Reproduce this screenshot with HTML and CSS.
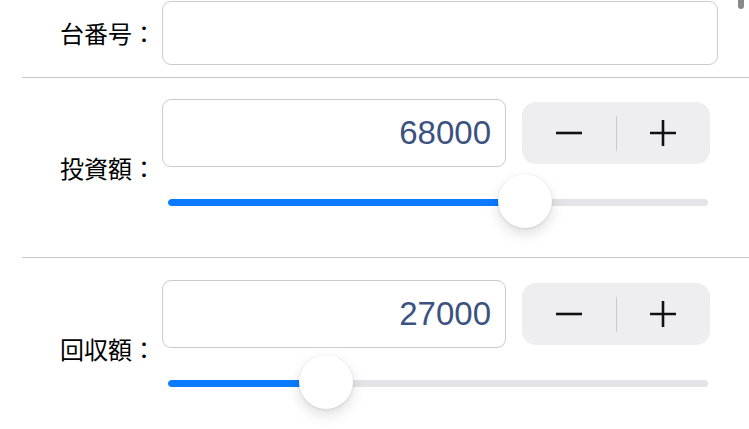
FILE: index.html
```html
<!DOCTYPE html>
<html lang="ja">
<head>
  <meta charset="UTF-8" />
  <meta name="viewport" content="width=device-width, initial-scale=1.0" />
  <title>収支入力</title>
  <link rel="stylesheet" href="styles.css">
</head>
<body>
  <div class="form">
    <!-- 台番号 -->
    <div class="row row-first">
      <label class="label">台番号：</label>
      <div class="field">
        <input class="text-input plain" type="text" value="">
      </div>
    </div>

    <!-- 投資額 -->
    <div class="row">
      <label class="label">投資額：</label>
      <div class="field">
        <div class="input-line">
          <input class="text-input num" type="text" value="68000">
          <div class="stepper">
            <button class="step-btn" aria-label="minus">
              <svg width="26" height="26" viewBox="0 0 26 26"><path d="M0 13H26" stroke="#111" stroke-width="2.6"/></svg>
            </button>
            <span class="step-sep"></span>
            <button class="step-btn" aria-label="plus">
              <svg width="26" height="26" viewBox="0 0 26 26"><path d="M0 13H26M13 0V26" stroke="#111" stroke-width="2.6"/></svg>
            </button>
          </div>
        </div>
        <div class="slider" style="--v:0.68">
          <div class="track"><div class="fill"></div></div>
          <div class="thumb"></div>
        </div>
      </div>
    </div>

    <!-- 回収額 -->
    <div class="row row-last">
      <label class="label">回収額：</label>
      <div class="field">
        <div class="input-line">
          <input class="text-input num" type="text" value="27000">
          <div class="stepper">
            <button class="step-btn" aria-label="minus">
              <svg width="26" height="26" viewBox="0 0 26 26"><path d="M0 13H26" stroke="#111" stroke-width="2.6"/></svg>
            </button>
            <span class="step-sep"></span>
            <button class="step-btn" aria-label="plus">
              <svg width="26" height="26" viewBox="0 0 26 26"><path d="M0 13H26M13 0V26" stroke="#111" stroke-width="2.6"/></svg>
            </button>
          </div>
        </div>
        <div class="slider" style="--v:0.27">
          <div class="track"><div class="fill"></div></div>
          <div class="thumb"></div>
        </div>
      </div>
    </div>
  </div>

  <div class="scroll-indicator"></div>
</body>
</html>
```

FILE: styles.css
```css
/* Reset */
* { margin: 0; padding: 0; box-sizing: border-box; }
body {
  background: #fff;
  overflow: hidden;
  font-family: "Noto Sans CJK JP", sans-serif;
  color: #000;
}

/* Form list with inset separators */
.form {
  margin-left: 22px;
}
.row {
  display: flex;
  align-items: center;
  gap: 6px;
  padding: 21px 31px 21px 0;
  border-top: 1px solid #c8c8cc;
}
.row-first {
  padding-top: 1px;
  padding-bottom: 12px;
  border-top: none;
}
.row-last {
  padding-top: 22px;
}
.label {
  flex: 0 0 134px;
  text-align: right;
  font-size: 24px;
  line-height: 30px;
  white-space: nowrap;
}
.field {
  flex: 1;
  display: flex;
  flex-direction: column;
}

/* Text inputs */
.text-input {
  display: block;
  height: 68px;
  border: 1px solid #cbcbcf;
  border-radius: 9px;
  background: #fff;
  outline: none;
  font-family: "Liberation Sans", Arial, sans-serif;
  font-size: 33px;
  color: #3b5281;
  padding: 0 14px;
}
.text-input.plain {
  width: 100%;
  height: 64px;
}
.text-input.num {
  flex: 0 0 344px;
  width: 344px;
  text-align: right;
}

/* Number line: input + stepper */
.input-line {
  display: flex;
  align-items: center;
  gap: 16px;
}
.stepper {
  display: flex;
  align-items: center;
  width: 188px;
  height: 62px;
  background: #eeeef0;
  border-radius: 14px;
}
.step-btn {
  flex: 1;
  height: 100%;
  border: none;
  background: transparent;
  display: flex;
  align-items: center;
  justify-content: center;
}
.step-btn svg { display: block; }
.step-sep {
  width: 1px;
  height: 35px;
  background: #c9c9ce;
}

/* Slider */
.slider {
  position: relative;
  height: 69px;
  margin: 0 10px 0 6px;
}
.track {
  margin-top: 32px;
  height: 7px;
  border-radius: 4px;
  background: #e3e3e8;
  overflow: hidden;
}
.fill {
  height: 100%;
  width: calc(var(--v) * (100% - 54px) + 27px);
  background: #0a7aff;
  border-radius: 4px 0 0 4px;
}
.thumb {
  position: absolute;
  top: 7px;
  left: calc(var(--v) * (100% - 54px));
  width: 54px;
  height: 54px;
  border-radius: 50%;
  background: #fff;
  box-shadow: 0 6px 14px rgba(0,0,0,0.13), 0 1px 3px rgba(0,0,0,0.08), 0 0 0 0.5px rgba(0,0,0,0.04);
}

/* Scroll indicator at the top right */
.scroll-indicator {
  position: fixed;
  top: 0;
  right: 5px;
  width: 6px;
  height: 9px;
  border-radius: 0 0 3px 3px;
  background: #8a8a8e;
}
```
